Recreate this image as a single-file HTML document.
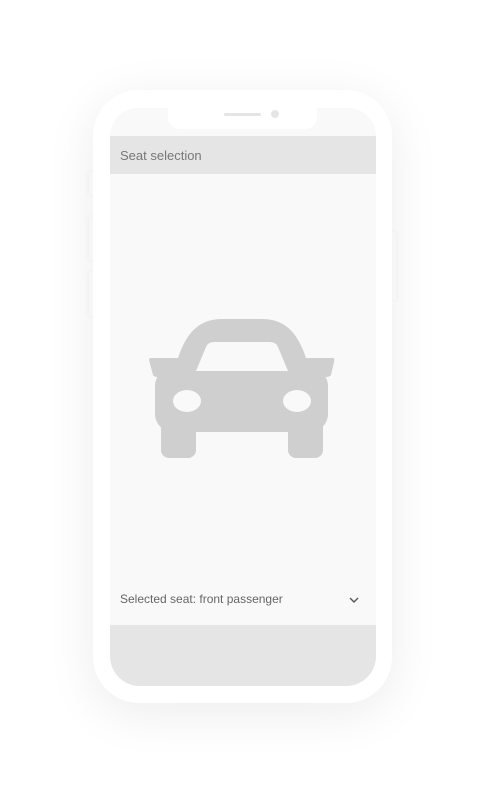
<!DOCTYPE html>
<html><head><style>
html,body{margin:0;padding:0;background:#fff;width:486px;height:794px;overflow:hidden;font-family:"Liberation Sans",sans-serif}
.phone{position:absolute;left:93px;top:90px;width:299px;height:613px;background:#fff;border-radius:46px;box-shadow:0 10px 50px rgba(0,0,0,0.08)}
.btn{position:absolute;background:#fff;border-radius:2px;box-shadow:0 0 6px rgba(0,0,0,0.05)}
.screen{position:absolute;left:110px;top:108px;width:266px;height:578px;background:#f9f9f9;border-radius:28px 28px 30px 30px;overflow:hidden}
.notch{position:absolute;left:58px;top:0;width:149px;height:21px;background:#fff;border-radius:0 0 12px 12px}
.spk{position:absolute;left:56px;top:5px;width:37px;height:3px;background:#e5e5e5;border-radius:2px}
.cam{position:absolute;left:103px;top:2px;width:8px;height:8px;background:#e5e5e5;border-radius:50%}
.hdr{position:absolute;left:0;top:28px;width:266px;height:38px;background:#e5e5e5;color:#777;font-size:13px;line-height:40px;padding-left:10px;box-sizing:border-box}
.sel{position:absolute;left:10px;top:484px;font-size:12px;color:#666}
.bot{position:absolute;left:0;top:517px;width:266px;height:61px;background:#e5e5e5}
</style></head><body>
<div class="btn" style="left:89px;top:172px;width:6px;height:23px"></div>
<div class="btn" style="left:89px;top:217px;width:6px;height:43px"></div>
<div class="btn" style="left:89px;top:272px;width:6px;height:44px"></div>
<div class="btn" style="left:390px;top:232px;width:6px;height:68px"></div>
<div class="phone"></div>
<div class="screen">
<div class="notch"><div class="spk"></div><div class="cam"></div></div>
<div class="hdr">Seat selection</div>
<svg style="position:absolute;left:0;top:0" width="266" height="578" viewBox="110 108 266 578">
<g fill="#cfcfcf">
<path d="M178 358 C186 334 198 319 222 319 L262 319 C286 319 298 334 306 358 Z"/>
<path d="M149 360 Q149 358 151 358 L333 358 Q335 358 334 362 L331 375 Q330 377 326 377 L158 377 Q154 377 153 375 Z"/>
<rect x="155" y="368" width="173" height="64" rx="18"/>
<rect x="161" y="410" width="35" height="48" rx="8"/>
<rect x="288" y="410" width="35" height="48" rx="8"/>
</g>
<path d="M196 371 L206 347 Q208 342 214 342 L270 342 Q276 342 278 347 L288 371 Z" fill="#f9f9f9"/>
<ellipse cx="187" cy="401" rx="14" ry="11" fill="#f9f9f9"/>
<ellipse cx="297" cy="401" rx="14" ry="11" fill="#f9f9f9"/>
<path d="M350 598 L354 602 L358 598" fill="none" stroke="#555" stroke-width="1.4"/>
</svg>
<div class="sel">Selected seat: front passenger</div>
<div class="bot"></div>
</div>
</body></html>
